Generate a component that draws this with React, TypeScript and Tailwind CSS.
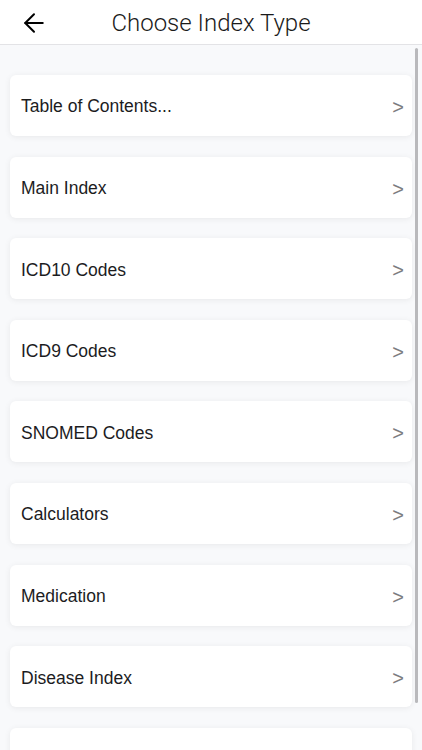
import { ArrowLeft } from "lucide-react";

const items = [
  "Table of Contents...",
  "Main Index",
  "ICD10 Codes",
  "ICD9 Codes",
  "SNOMED Codes",
  "Calculators",
  "Medication",
  "Disease Index",
  "",
];

export default function App() {
  return (
    <div
      className="relative h-[750px] w-[422px] overflow-hidden bg-[#f8f9fb]"
      style={{ fontFamily: '"Liberation Sans", Arial, sans-serif' }}
    >
      {/* Header */}
      <div className="relative flex h-[45px] items-center justify-center border-b border-[#e3e3e6] bg-white">
        <button className="absolute left-[19px] top-[8px] text-black">
          <ArrowLeft className="h-[30px] w-[30px]" strokeWidth={1.6} />
        </button>
        <h1
          className="pt-[1px] text-[24px] text-[#1a1a1a]"
          style={{ fontFamily: 'Roboto, "Liberation Sans", sans-serif', fontWeight: 300 }}
        >
          Choose Index Type
        </h1>
      </div>

      {/* List */}
      <div className="flex flex-col gap-[20.6px] px-[10px] pt-[30px]">
        {items.map((item, i) => (
          <div
            key={i}
            className="flex h-[61px] items-center justify-between rounded-[6px] bg-white pl-[11px] pr-[8px] shadow-[0_1px_6px_rgba(0,0,0,0.07)]"
          >
            <span className="pt-[2px] text-[17.5px] text-[#1c1c1e]">{item}</span>
            {item && <span className="pt-[3px] text-[20px] text-[#7c7c80]">&gt;</span>}
          </div>
        ))}
      </div>

      {/* Scroll indicator */}
      <div className="absolute left-[415px] top-[48px] h-[655px] w-[3px] rounded-full bg-[#b9b9bc]" />
    </div>
  );
}
